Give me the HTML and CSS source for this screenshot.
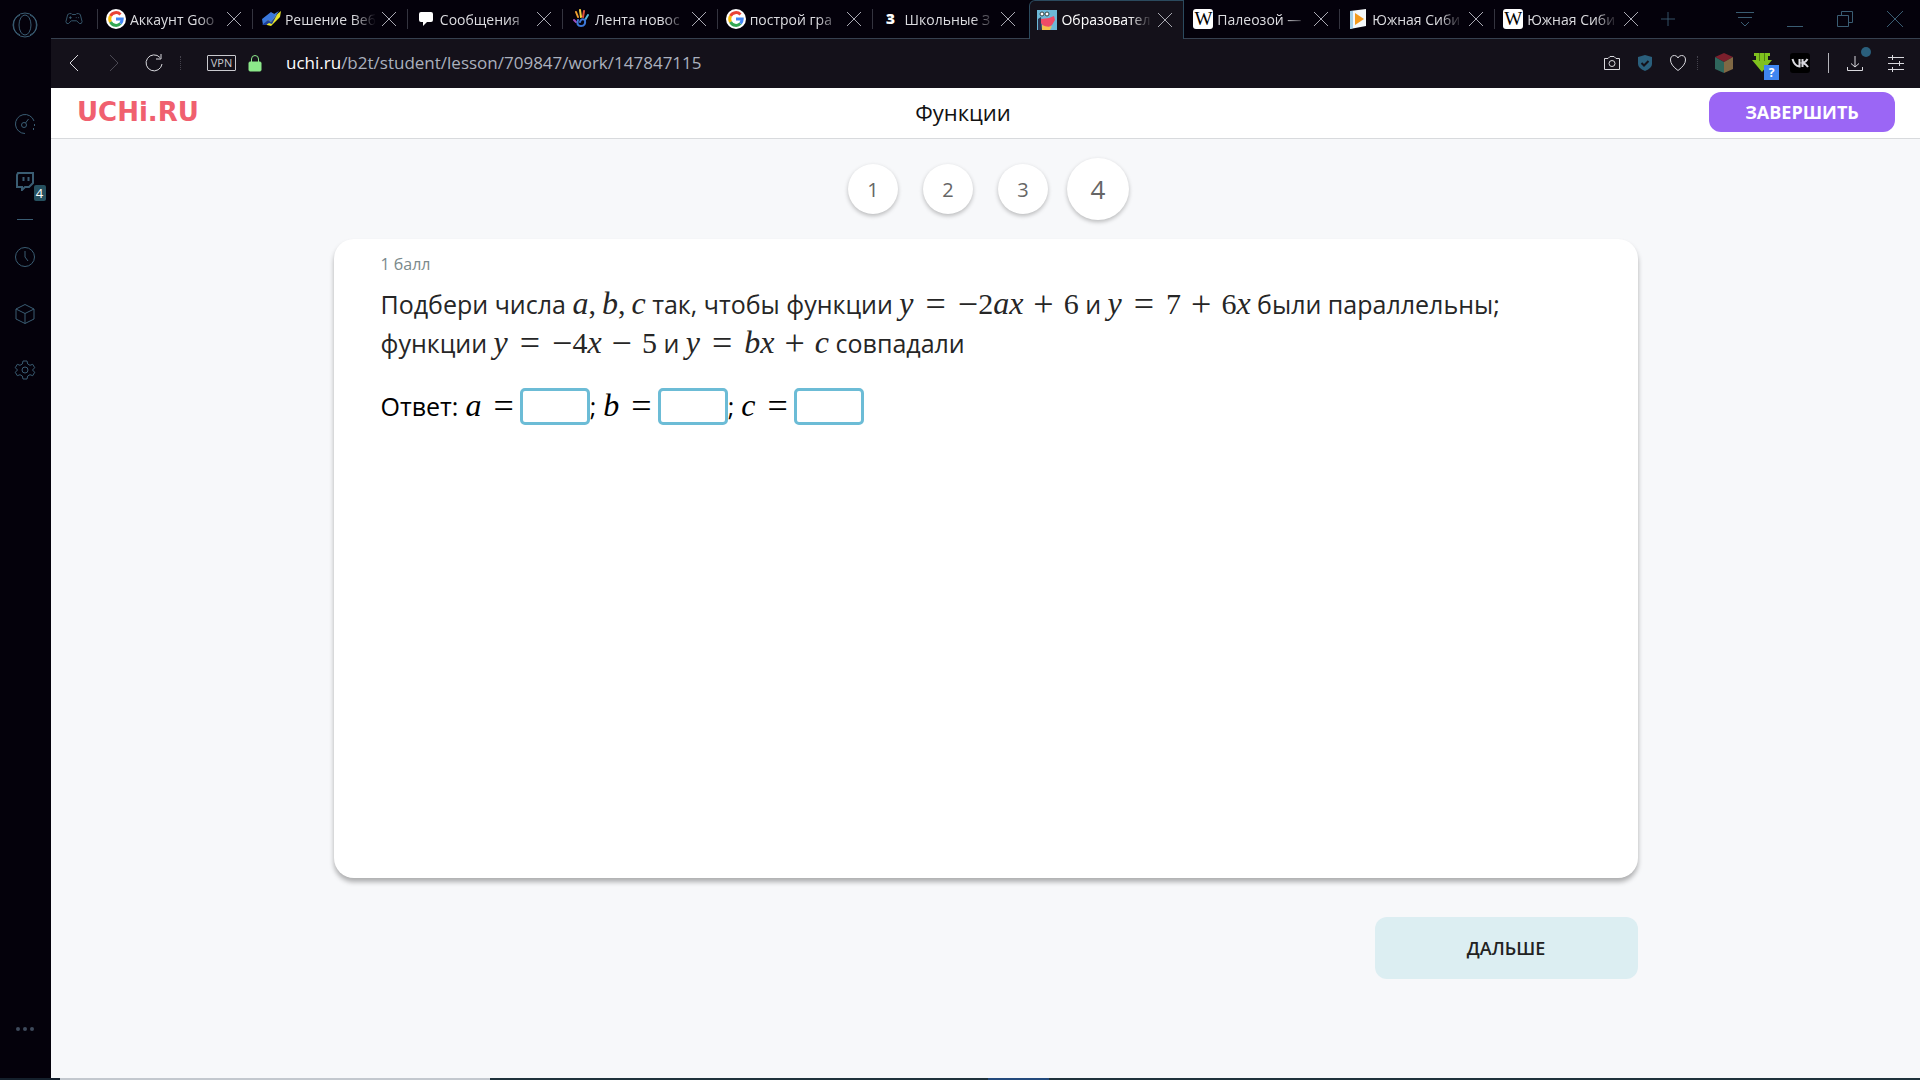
FILE: index.html
```
<!DOCTYPE html>
<html lang="ru">
<head>
<meta charset="utf-8">
<meta name="viewport" content="width=device-width, initial-scale=1">
<title>Функции</title>
<link rel="stylesheet" href="styles.css">
</head>
<body>
<div class="window">
    <!-- left browser panel -->
    <nav class="sidebar">
        <svg class="opera" width="26" height="26" viewBox="0 0 26 26"><circle cx="13" cy="13" r="12"/><ellipse cx="13" cy="13" rx="6" ry="10"/><path d="M8 3a11 11 0 0 0 0 20M18 3a11 11 0 0 1 0 20"/></svg>
        <svg class="speed" width="22" height="22" viewBox="0 0 22 22"><path d="M11 20.500A9.500 9.500 0 1 1 20 8M20.500 11v2M19.500 15v2"/><circle cx="10" cy="12" r="2.500"/><path d="M11.500 10l3-4"/></svg>
        <span class="twitch">
            <svg width="20" height="20" viewBox="0 0 20 20"><path class="thick" d="M3 2h15v10l-4 4h-4l-3 3v-3H2V4z"/><path class="thick" d="M8.500 6v4M13.500 6v4"/></svg>
            <span class="count">4</span>
        </span>
        <hr>
        <svg class="clock" width="22" height="22" viewBox="0 0 22 22"><circle cx="11" cy="11" r="9.500"/><path d="M11 5v6l3 4"/></svg>
        <svg class="cube" width="22" height="22" viewBox="0 0 22 22"><path d="M11 1.500l9 4.500v10l-9 4.500-9-4.500V6zM2 6l9 4.500L20 6M11 10.500v10"/></svg>
        <svg class="gear" width="22" height="22" viewBox="0 0 22 22"><circle cx="11" cy="11" r="3"/><path d="M9 2h4l.700 3 2.300 1.300 2.700-1 2 3.400L18.500 11l2.200 2.300-2 3.400-2.700-1-2.300 1.300-.700 3H9l-.700-3L6 15.700l-2.700 1-2-3.400L3.500 11 1.300 8.700l2-3.400 2.700 1L8.300 5z"/></svg>
        <svg class="more" width="22" height="6" viewBox="0 0 22 6"><circle cx="4" cy="3" r="2"/><circle cx="11" cy="3" r="2"/><circle cx="18" cy="3" r="2"/></svg>
    </nav>

    <div class="main">
        <div class="tabbar">
            <svg class="gamepad" width="20" height="16" viewBox="0 0 20 16"><path d="M5 2h2l1 1h4l1-1h2l2 1 2 8-1 2h-2l-3-3H7l-3 3H2l-1-2 2-8z"/><path d="M6 5v3M4.500 6.500h3M12 6.500h1M14.500 6.500h1"/></svg>
            <div class="tabs">
                <div class="tab">
                    <svg class="fav" viewBox="0 0 20 20"><use href="#google"/></svg>
                    <span class="name">Аккаунт Goo</span><button class="close" aria-label="Закрыть"></button>
                </div>
                <div class="tab">
                    <svg class="fav" viewBox="0 0 20 20"><path d="M2 12l9-8 4 2 5-4-1 6-9 9-4-1z" fill="#e8e52a"/><path d="M1 10l9-7 3 2 5-3-8 11-3-2-5 5z" fill="#3a78dc"/><path d="M1 16l6-5 3 2 7-9-6 11-3-1-3 2z" fill="#1c3f9c"/></svg>
                    <span class="name">Решение Веб</span><button class="close" aria-label="Закрыть"></button>
                </div>
                <div class="tab">
                    <svg class="fav" viewBox="0 0 20 20"><path d="M5 3h10q2 0 2 2v6q0 2-2 2h-4l-4 4v-4H5q-2 0-2-2V5q0-2 2-2z" fill="#fff"/></svg>
                    <span class="name">Сообщения</span><button class="close" aria-label="Закрыть"></button>
                </div>
                <div class="tab">
                    <svg class="fav" viewBox="0 0 20 20" fill="none" stroke-width="2" stroke-linecap="round"><path d="M7 8L5 3" stroke="#f0a030"/><path d="M10 8L9 1" stroke="#f3d33c"/><path d="M12 8l1-6" stroke="#e0523c"/><path d="M14 11l3-5" stroke="#54b8d8"/><path d="M5 13l-2-2" stroke="#a050c0"/><path d="M7 11q-2 6 3 6 5 0 4-6-4-2-5 2" stroke="#3c78d8"/></svg>
                    <span class="name">Лента новос</span><button class="close" aria-label="Закрыть"></button>
                </div>
                <div class="tab">
                    <svg class="fav" viewBox="0 0 20 20"><use href="#google"/></svg>
                    <span class="name">построй гра</span><button class="close" aria-label="Закрыть"></button>
                </div>
                <div class="tab">
                    <span class="fav znanija">З</span>
                    <span class="name">Школьные З</span><button class="close" aria-label="Закрыть"></button>
                </div>
                <div class="tab active">
                    <svg class="fav" viewBox="0 0 20 20"><path d="M0 0h20v20H0z" fill="#6cb8d8"/><path d="M1 9l3-2 1 13H1z" fill="#2c3450"/><path d="M4 9l8-1 5-2 1 4-3 5-3 2H7l-3-4z" fill="#ef4a66"/><path d="M5 15q6 3 10 1l-2 4H5z" fill="#f3c04c"/><circle cx="5" cy="4" r="2" fill="#fff" stroke="#344"/><circle cx="10" cy="4" r="2" fill="#fff" stroke="#344"/></svg>
                    <span class="name">Образовател</span><button class="close" aria-label="Закрыть"></button>
                </div>
                <div class="tab">
                    <span class="fav wiki">W</span>
                    <span class="name">Палеозой —</span><button class="close" aria-label="Закрыть"></button>
                </div>
                <div class="tab">
                    <svg class="fav" viewBox="0 0 20 20"><path d="M2 2l16-2v17L2 20z" fill="#f4f8fa"/><path d="M2 2v18l3-1V2z" fill="#a4d0e8"/><path d="M7 4l9 6-9 6z" fill="#f39a1e"/></svg>
                    <span class="name">Южная Сиби</span><button class="close" aria-label="Закрыть"></button>
                </div>
                <div class="tab">
                    <span class="fav wiki">W</span>
                    <span class="name">Южная Сиби</span><button class="close" aria-label="Закрыть"></button>
                </div>
            </div>
            <svg class="plus" width="16" height="16" viewBox="0 0 16 16"><path d="M8 0v16M0 8h16"/></svg>
            <div class="winbuttons">
                <svg width="20" height="20" viewBox="0 0 20 20"><path d="M1 3.500h18M3 8.500h14M6 13l4 4 4-4"/></svg>
                <svg width="20" height="20" viewBox="0 0 20 20"><path d="M2 17.500h16"/></svg>
                <svg width="20" height="20" viewBox="0 0 20 20"><path d="M2.500 6.500h11v11h-11zM6.500 6V2.500h11v11H14"/></svg>
                <svg width="20" height="20" viewBox="0 0 20 20"><path d="M2 2l16 16M18 2L2 18"/></svg>
            </div>
        </div>

        <div class="toolbar">
            <svg class="back" width="20" height="20" viewBox="0 0 20 20"><path d="M14 2l-8 8 8 8"/></svg>
            <svg class="forward" width="20" height="20" viewBox="0 0 20 20"><path d="M6 2l8 8-8 8"/></svg>
            <svg class="reload" width="20" height="20" viewBox="0 0 20 20"><path d="M16 4.500A8 8 0 1 0 18 11M12 6h5V1"/></svg>
            <i class="grip"></i>
            <span class="vpn">VPN</span>
            <svg class="lock" width="14" height="18" viewBox="0 0 14 18"><path d="M3.500 8V5a3.500 3.500 0 0 1 7 0v3"/><rect x="1" y="8" width="12" height="9" rx="1"/></svg>
            <span class="url"><b>uchi.ru</b>/b2t/student/lesson/709847/work/147847115</span>
            <div class="extensions">
                <svg width="18" height="18" viewBox="0 0 18 18"><path d="M1.500 4.500H5l2-2h4l2 2h3.500v11h-15z"/><circle cx="9" cy="9.500" r="3"/></svg>
                <svg class="shield" width="16" height="18" viewBox="0 0 16 18"><path class="flat" d="M8 1l7 2v7q0 4-7 7-7-3-7-7V3z" fill="#2a5f7c"/><path class="tick" d="M4.500 9l2.500 2.500L11.500 7"/></svg>
                <svg width="18" height="18" viewBox="0 0 18 18"><path d="M9 16.500Q1.500 11 1.500 6 1.500 1.500 5.500 1.500 8 1.500 9 4q1-2.500 3.500-2.500 4 0 4 4.500 0 5-7.500 10.500z"/></svg>
                <i class="grip"></i>
                <svg class="ext" width="20" height="20" viewBox="0 0 20 20"><path d="M10 0l9 4-9 5-9-5z" fill="#7c1f2c"/><path d="M1 4l9 5v11l-9-4z" fill="#2f665c"/><path d="M19 4l-9 5v11l9-4z" fill="#806844"/></svg>
                <span class="savefrom">
                    <svg width="20" height="20" viewBox="0 0 20 20"><path d="M2 0h16v3h-2v4h4L10 19 0 7h4V3H2z" fill="#7fc11e"/><path d="M7 0h1v8H7zM12 0h1v8h-1z" fill="#4f8010"/></svg>
                    <span class="question">?</span>
                </span>
                <svg class="vk" width="20" height="20" viewBox="0 0 20 20"><rect class="flat" width="20" height="20" rx="3" fill="#000"/><path d="M2.500 6q2 7 7 7.500V6M12.500 6v8M17.500 6q-1.500 3-4.500 4 3 1 5 4" stroke-width="2"/></svg>
                <i class="line"></i>
                <span class="download">
                    <svg width="16" height="18" viewBox="0 0 16 18"><path d="M8 2v11M4 9.500L8 13l4-3.500M.500 13v3.500h15V13"/></svg>
                    <i class="dot"></i>
                </span>
                <svg class="settings" width="16" height="18" viewBox="0 0 16 18"><path d="M0 3.500h16M0 9.500h16M0 15.500h16M4.500 1v5M11.500 7v5M4.500 13v5"/></svg>
            </div>
        </div>

        <div class="page">
            <header>
                <a href="#" class="logo">UCHi.RU</a>
                <h1>Функции</h1>
                <button class="finish">ЗАВЕРШИТЬ</button>
            </header>
            <div class="steps">
                <button>1</button>
                <button>2</button>
                <button>3</button>
                <button class="current">4</button>
            </div>
            <div class="lesson">
                <div class="card">
                    <div class="points">1 балл</div>
                    <p class="task">Подбери числа <span class="m"><i>a</i>,&thinsp;<i>b</i>,&thinsp;<i>c</i></span> так, чтобы функции <span class="m"><i>y</i><span class="op rel">=</span><span class="op">−</span>2<i>ax</i><span class="op bin">+</span>6</span> и <span class="m"><i>y</i><span class="op rel">=</span>7<span class="op bin">+</span>6<i>x</i></span> были параллельны;<br>
                    функции <span class="m"><i>y</i><span class="op rel">=</span><span class="op">−</span>4<i>x</i><span class="op bin">−</span>5</span> и <span class="m"><i>y</i><span class="op rel">=</span><i>bx</i><span class="op bin">+</span><i>c</i></span> совпадали</p>
                    <div class="answer">
                        <span>Ответ:</span>
                        <label for="a" class="m"><i>a</i><span class="op rel">=</span></label><input type="text" id="a"><span>;</span>
                        <label for="b" class="m"><i>b</i><span class="op rel">=</span></label><input type="text" id="b"><span>;</span>
                        <label for="c" class="m"><i>c</i><span class="op rel">=</span></label><input type="text" id="c">
                    </div>
                </div>
                <button class="next">ДАЛЬШЕ</button>
            </div>
        </div>
    </div>
</div>
<div class="taskbar"></div>

<svg width="0" height="0" class="defs">
    <symbol id="google" viewBox="0 0 20 20">
        <circle cx="10" cy="10" r="10" fill="#fff"/>
        <g fill="none" stroke-width="3"><path d="M14.500 5.500A6.200 6.200 0 0 0 4.500 7" stroke="#ea4335"/><path d="M4.500 7a6.500 6.500 0 0 0 0 6" stroke="#fbbc05"/><path d="M4.500 13a6.200 6.200 0 0 0 10 1.500" stroke="#34a853"/><path d="M14.500 14.500q1.700-2 1.700-4.500H10" stroke="#4285f4"/></g>
    </symbol>
</svg>
</body>
</html>
```
FILE: styles.css
```
* {
    box-sizing: border-box;
}
body {
    margin: 0;
    min-height: 100vh;
    display: flex;
    flex-direction: column;
    background-color: #04010b;
    font-family: "Open Sans", "Noto Sans", sans-serif;
}
button {
    font-family: inherit;
    border: none;
    padding: 0;
    cursor: pointer;
}
svg {
    display: block;
    flex: none;
    fill: none;
    stroke: #3a5d73;
}
.defs {
    position: absolute;
}
.window {
    flex: 1;
    display: flex;
}
/* Left panel */
.sidebar {
    width: 51px;
    flex: none;
    display: flex;
    flex-direction: column;
    align-items: center;
    padding: 12px 2px 46px 0;
    background-color: #04010b;
}
.sidebar .speed {
    margin-top: 75px;
}
.twitch {
    position: relative;
    margin-top: 36px;
}
.thick {
    stroke-width: 2;
}
.count {
    position: absolute;
    left: 19px;
    top: 14px;
    width: 12px;
    height: 16px;
    border-radius: 2px;
    background-color: #26505f;
    color: white;
    font-size: 13px;
    line-height: 16px;
    text-align: center;
}
.sidebar hr {
    width: 16px;
    margin: 28px 0 0;
    border: none;
    border-top: 1px solid #3a5d73;
}
.clock {
    margin-top: 26px;
}
.cube {
    margin-top: 35px;
}
.gear {
    margin-top: 34px;
}
.sidebar .more {
    margin-top: auto;
    fill: #3e4a5c;
    stroke: none;
}
.main {
    flex: 1;
    min-width: 0;
    display: flex;
    flex-direction: column;
}
/* Tabs */
.tabbar {
    height: 39px;
    display: flex;
    align-items: center;
    padding: 0 15px 0 14px;
    border-bottom: 1px solid #36404f;
}
.gamepad {
    width: 18px;
    margin-right: 14px;
}
.tabs {
    flex: 1;
    max-width: 1552px;
    height: 39px;
    display: flex;
}
.tab {
    flex: 1;
    min-width: 0;
    display: flex;
    align-items: center;
    padding: 0 11px 0 9px;
    background: linear-gradient(#34343f, #34343f) left 0 top 9px / 1px 20px no-repeat;
}
.tab.active {
    margin-left: 3px;
    padding-left: 7px;
    background: #14111a;
    border: 1px solid #2b4a5e;
    border-bottom: none;
    border-top-left-radius: 6px;
}
.tab.active + .tab {
    background: none;
}
.fav {
    width: 20px;
    height: 20px;
    flex: none;
    stroke: none;
    margin-right: 4px;
}
.znanija {
    color: white;
    font-size: 14px;
    font-weight: 800;
    line-height: 20px;
    text-align: center;
}
.wiki {
    background-color: white;
    border-radius: 3px;
    font-family: "Liberation Serif", serif;
    font-size: 19px;
    line-height: 20px;
    text-align: center;
}
.name {
    flex: 1;
    overflow: hidden;
    white-space: nowrap;
    color: #dcdce0;
    font-size: 14px;
    -webkit-mask-image: linear-gradient(to right, black 75%, transparent);
    mask-image: linear-gradient(to right, black 75%, transparent);
}
.active .name {
    color: white;
}
.close {
    width: 14px;
    height: 14px;
    margin-left: 6px;
    flex: none;
    background: linear-gradient(45deg, transparent 47%, #a9a9b2 47%, #a9a9b2 53%, transparent 53%), linear-gradient(-45deg, transparent 47%, #a9a9b2 47%, #a9a9b2 53%, transparent 53%);
}
.plus {
    width: 14px;
    margin-left: 12px;
}
.winbuttons {
    display: flex;
    gap: 30px;
    margin-left: auto;
}
/* Address bar */
.toolbar {
    height: 49px;
    display: flex;
    align-items: center;
    padding: 0 16px 2px 13px;
    background-color: #14111a;
}
.toolbar svg {
    stroke: #d9d9de;
}
.toolbar .forward {
    margin-left: 20px;
    stroke: #4a4852;
}
.reload {
    margin-left: 20px;
}
.grip {
    height: 14px;
    border-left: 1px dotted #44424c;
}
.reload + .grip {
    margin: 0 26px 0 16px;
}
.vpn {
    width: 29px;
    height: 16px;
    border: 1px solid #c9c9ce;
    border-radius: 1px;
    color: #c9c9ce;
    font-size: 11px;
    line-height: 14px;
    text-align: center;
}
.toolbar .lock {
    margin: 0 24px 0 12px;
    stroke: #8ce98a;
}
.lock rect {
    fill: #8ce98a;
}
.url {
    color: #aab0bd;
    font-size: 17px;
}
.url b {
    color: white;
    font-weight: 400;
}
.extensions {
    margin-left: auto;
    display: flex;
    align-items: center;
    gap: 16px;
}
.extensions .grip {
    margin-left: -6px;
}
.toolbar .ext, .toolbar .savefrom svg, .toolbar .flat {
    stroke: none;
}
.tick {
    stroke: #14111a;
    stroke-width: 2;
}
.savefrom, .vk, .line, .download {
    margin-left: 2px;
}
.settings {
    margin-left: 9px;
}
.savefrom, .download {
    position: relative;
}
.question {
    position: absolute;
    left: 12px;
    top: 12px;
    width: 15px;
    height: 15px;
    background-color: #3f86f0;
    color: white;
    font-size: 12px;
    font-weight: 700;
    line-height: 15px;
    text-align: center;
}
.line {
    height: 20px;
    border-left: 1px solid #b5b5bb;
}
.dot {
    position: absolute;
    left: 14px;
    top: -7px;
    width: 10px;
    height: 10px;
    border-radius: 50%;
    background-color: #2a5f7c;
}
/* Lesson page */
.page {
    flex: 1;
    background-color: #f7f8fa;
}
header {
    height: 51px;
    display: flex;
    align-items: center;
    justify-content: space-between;
    padding: 0 25px 2px 26px;
    background-color: white;
    border-bottom: 1px solid #d8dadd;
}
.logo {
    width: 140px;
    color: #f0606f;
    font-family: "DejaVu Sans", sans-serif;
    font-size: 26px;
    font-weight: 700;
    line-height: 40px;
    text-decoration: none;
}
h1 {
    margin: 0;
    font-size: 22px;
    font-weight: 400;
    color: #111;
}
.finish {
    width: 186px;
    height: 40px;
    border-radius: 12px;
    background-color: #9b66f5;
    color: white;
    font-size: 18px;
    font-weight: 700;
}
.steps {
    height: 100px;
    display: flex;
    align-items: center;
    justify-content: center;
    gap: 25px;
}
.steps button {
    width: 50px;
    height: 50px;
    border-radius: 50%;
    background-color: white;
    box-shadow: 0 2px 4px rgba(0, 0, 0, 0.25);
    color: #666;
    font-size: 20px;
}
.steps .current {
    width: 62px;
    height: 62px;
    margin: 0 -6px;
    font-size: 26px;
}
.lesson {
    max-width: 1304px;
    margin: 0 auto;
}
.card {
    min-height: 639px;
    padding: 13px 47px;
    border-radius: 20px;
    background-color: white;
    box-shadow: 0 4px 5px rgba(0, 0, 0, 0.3);
}
.points {
    color: #7b8a8c;
    font-size: 16px;
    line-height: 24px;
}
.task {
    margin: 9px 0 0;
    color: #262626;
    font-size: 25px;
    line-height: 39px;
}
/* Formulas */
.m {
    font-family: "Liberation Serif", serif;
    font-size: 30px;
    line-height: 1;
    white-space: nowrap;
}
.m i {
    font-size: 32px;
    line-height: 0;
}
.op {
    font-size: 36px;
    line-height: 0;
    vertical-align: -2px;
}
.rel {
    padding: 0 12px;
}
.bin {
    padding: 0 10px;
}
.answer {
    display: flex;
    align-items: center;
    margin-top: 23px;
    font-size: 25px;
    line-height: 40px;
}
.answer .m {
    margin-left: 7px;
}
.answer .rel {
    padding-right: 6px;
}
.answer input {
    width: 70px;
    height: 37px;
    border: 3px solid #6cbcd6;
    border-radius: 5px;
    background-color: white;
    font-size: 22px;
    text-align: center;
}
.next {
    display: block;
    width: 263px;
    height: 62px;
    margin: 39px 0 0 auto;
    border-radius: 12px;
    background-color: #dceef2;
    color: #222;
    font-size: 18px;
    font-weight: 600;
}
/* Strip of the system taskbar */
.taskbar {
    height: 2px;
    background: linear-gradient(to right, #14202c 60px, #c3c8ce 60px, #c3c8ce 490px, #1f323c 490px, #1f323c 988px, #234a7c 988px, #234a7c 1049px, #1f323c 1049px);
}
```
